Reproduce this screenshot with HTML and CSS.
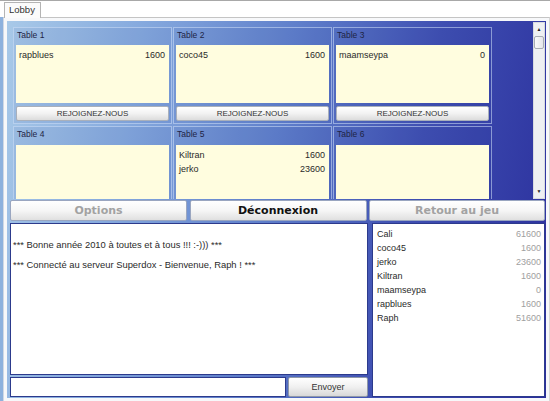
FILE: index.html
```html
<!DOCTYPE html>
<html>
<head>
<meta charset="utf-8">
<link rel="stylesheet" href="styles.css">
</head>
<body>
<div class="tabstrip"><div class="tab">Lobby</div></div>
<div class="tabbody">
  <div class="frame">
    <div class="panel">
      <div class="lobby">
        <div class="tables">
          <div class="table">
            <div class="tlabel">Table 1</div>
            <div class="tlist"><div class="row"><span>rapblues</span><span>1600</span></div></div>
            <div class="join">REJOIGNEZ-NOUS</div>
          </div>
          <div class="table">
            <div class="tlabel">Table 2</div>
            <div class="tlist"><div class="row"><span>coco45</span><span>1600</span></div></div>
            <div class="join">REJOIGNEZ-NOUS</div>
          </div>
          <div class="table">
            <div class="tlabel">Table 3</div>
            <div class="tlist"><div class="row"><span>maamseypa</span><span>0</span></div></div>
            <div class="join">REJOIGNEZ-NOUS</div>
          </div>
          <div class="table">
            <div class="tlabel">Table 4</div>
            <div class="tlist"></div>
          </div>
          <div class="table">
            <div class="tlabel">Table 5</div>
            <div class="tlist">
              <div class="row"><span>Kiltran</span><span>1600</span></div>
              <div class="row"><span>jerko</span><span>23600</span></div>
            </div>
          </div>
          <div class="table">
            <div class="tlabel">Table 6</div>
            <div class="tlist"></div>
          </div>
        </div>
        <div class="scrollbar">
          <div class="sb-btn">&#9650;</div>
          <div class="sb-thumb"></div>
          <div class="sb-track"></div>
          <div class="sb-btn">&#9660;</div>
        </div>
      </div>
      <div class="actions">
        <div class="bigbtn disabled">Options</div>
        <div class="bigbtn">Déconnexion</div>
        <div class="bigbtn disabled">Retour au jeu</div>
      </div>
      <div class="bottom">
        <div class="chatcol">
          <div class="chat">
            <div class="msg">*** Bonne année 2010 à toutes et à tous !!! :-))) ***</div>
            <div class="msg">*** Connecté au serveur Superdox - Bienvenue, Raph ! ***</div>
          </div>
          <div class="sendrow">
            <div class="input"></div>
            <div class="send">Envoyer</div>
          </div>
        </div>
        <div class="players">
          <div class="prow"><span>Cali</span><span class="pv">61600</span></div>
          <div class="prow"><span>coco45</span><span class="pv">1600</span></div>
          <div class="prow"><span>jerko</span><span class="pv">23600</span></div>
          <div class="prow"><span>Kiltran</span><span class="pv">1600</span></div>
          <div class="prow"><span>maamseypa</span><span class="pv">0</span></div>
          <div class="prow"><span>rapblues</span><span class="pv">1600</span></div>
          <div class="prow"><span>Raph</span><span class="pv">51600</span></div>
        </div>
      </div>
    </div>
  </div>
</div>
</body>
</html>
```
FILE: styles.css
```css
* { box-sizing: border-box; }
html, body { margin: 0; padding: 0; }
body {
  width: 550px;
  height: 401px;
  overflow: hidden;
  background: #ffffff;
  font-family: "Liberation Sans", Arial, sans-serif;
  font-size: 9px;
  color: #222;
}
.tabstrip {
  height: 17px;
  border-top: 1px solid #a8a8a8;
  background: #ffffff;
  padding-left: 4px;
  padding-top: 1px;
  display: flex;
}
.tab {
  width: 37px;
  height: 16px;
  border: 1px solid #b4b4b4;
  border-bottom: none;
  background: #fbfbfb;
  padding-left: 4px;
  line-height: 14px;
  font-size: 9.5px;
  color: #333;
}
.tabbody {
  height: 384px;
  background: #8db1dd;
  padding-left: 3px;
}
.frame {
  width: 547px;
  height: 384px;
  border-top: 1px solid #c4c4c4;
  border-left: 1px solid #d0d8e4;
  border-right: 1px solid #d8d8d8;
  background: #f7f8fa;
  padding: 3px 3px 3px 3px;
}
.panel {
  height: 377px;
  background: linear-gradient(100deg, #a8c9e8 0%, #86aade 22%, #5f7fcb 48%, #3f4fb2 72%, #2a2e9c 100%);
  padding: 1px 1px 1px 3px;
  display: flex;
  flex-direction: column;
}
.lobby {
  height: 177px;
  display: flex;
  gap: 1px;
}
.tables {
  flex: 1;
  overflow: hidden;
  padding: 5px 0 0 3px;
  display: grid;
  grid-template-columns: 159px 159px 159px;
  grid-auto-rows: 97px;
  column-gap: 1px;
  row-gap: 2px;
}
.table {
  border: 1px solid rgba(210, 225, 250, 0.55);
  background: rgba(30, 50, 140, 0.06);
  padding: 0 2px 2px 2px;
  display: flex;
  flex-direction: column;
}
.tlabel {
  height: 18px;
  line-height: 15px;
  padding-left: 1px;
  font-size: 8.5px;
  color: #1e2444;
}
.tlist {
  height: 58px;
  flex: none;
  background: #fffddf;
  padding: 3px 4px 0 3px;
}
.row {
  height: 14px;
  line-height: 14px;
  display: flex;
  justify-content: space-between;
  color: #2a2a2a;
}
.join {
  margin-top: 3px;
  height: 15px;
  line-height: 13px;
  text-align: center;
  font-size: 8px;
  color: #333;
  border: 1px solid #a9b0bb;
  border-radius: 2px;
  background: linear-gradient(#ffffff 0%, #f2f2f2 50%, #dcdcdc 100%);
}
.scrollbar {
  width: 12px;
  background: #eef0f2;
  border: 1px solid #d8dbe0;
  display: flex;
  flex-direction: column;
}
.sb-btn {
  height: 13px;
  font-size: 5px;
  line-height: 13px;
  text-align: center;
  color: #222;
}
.sb-thumb {
  height: 13px;
  border: 1px solid #a8adb4;
  border-radius: 2px;
  background: linear-gradient(to right, #fafafa, #e4e6ea);
}
.sb-track { flex: 1; }
.actions {
  margin-top: 1px;
  height: 21px;
  display: grid;
  grid-template-columns: 177px 177px 176px;
  column-gap: 2.5px;
}
.bigbtn {
  border: 1px solid #9aa6c0;
  border-radius: 2px;
  background: linear-gradient(#ffffff 0%, #f6f6f6 50%, #e0e0e0 100%);
  text-align: center;
  line-height: 19px;
  font-family: "DejaVu Sans", Verdana, sans-serif;
  font-weight: bold;
  font-size: 11px;
  color: #111;
}
.bigbtn.disabled { color: #a2a2a2; }
.bottom {
  margin-top: 2px;
  flex: 1;
  display: flex;
  gap: 4px;
}
.chatcol {
  width: 358px;
  display: flex;
  flex-direction: column;
  gap: 2px;
}
.chat {
  flex: 1;
  background: #ffffff;
  border: 1px solid #2c3a8c;
  padding: 14px 0 0 2px;
  font-size: 9.4px;
  color: #2a2a2a;
}
.msg {
  height: 13px;
  line-height: 13px;
  margin-bottom: 7px;
}
.sendrow {
  height: 20px;
  display: flex;
  gap: 2px;
}
.input {
  flex: 1;
  background: #ffffff;
  border: 1px solid #2c3a8c;
}
.send {
  width: 80px;
  border: 1px solid #8f98a8;
  border-radius: 2px;
  background: linear-gradient(#ffffff 0%, #f0f0f0 50%, #d8d8d8 100%);
  text-align: center;
  line-height: 18px;
  font-size: 9px;
  color: #333;
}
.players {
  flex: 1;
  background: #ffffff;
  border: 1px solid #2c3a8c;
  padding: 3px 3px 0 4px;
}
.prow {
  height: 14px;
  line-height: 14px;
  display: flex;
  justify-content: space-between;
  color: #2a2a2a;
}
.pv { color: #a0a0a0; }
```
